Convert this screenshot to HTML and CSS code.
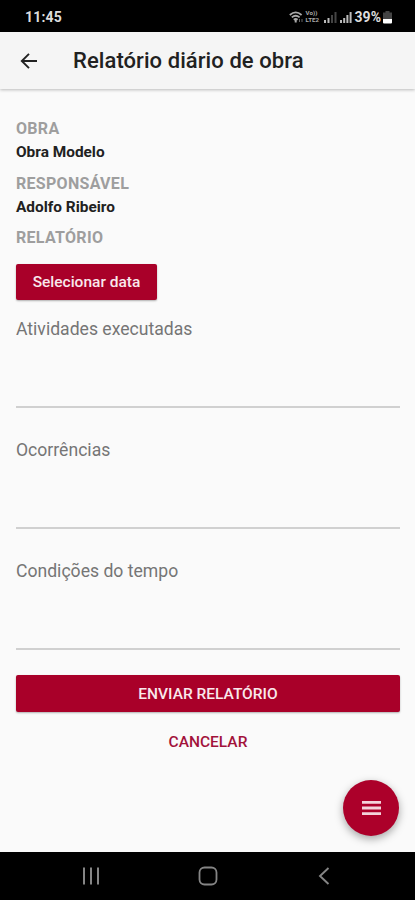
FILE: index.html
```html
<!DOCTYPE html>
<html lang="pt-BR">
<head>
  <meta charset="UTF-8">
  <meta name="viewport" content="width=device-width, initial-scale=1.0">
  <title>Relatório diário de obra</title>

  <link rel="stylesheet" href="styles.css">
</head>

<body>
  <div class="status-bar">
    <span class="time">11:45</span>
    <div class="status-icons">
      <svg class="wifi" width="15" height="13" viewBox="0 0 15 13" fill="none" stroke="#aaa" stroke-width="1.800">
        <path d="M.8 4Q6.700 -1.200 12.600 4M2.800 6.400Q6.700 3.200 10.600 6.400M4.800 8.700Q6.700 7.200 8.600 8.700"/>
        <path d="M6.700 9v2.500" stroke-width="2"/>
        <path d="M10.500 8v3M13 8v3" stroke="#666" stroke-width="1"/>
      </svg>
      <div class="volte"><span>Vo))</span><span>LTE2</span></div>
      <svg class="signal" width="13" height="12" viewBox="0 0 13 12">
        <path d="M0 9h2v3H0zM3.500 7h2v5h-2z" fill="#bbb"/>
        <path d="M7 4h2v8H7zM10.500 1h2v11h-2z" fill="#444"/>
      </svg>
      <svg class="signal" width="12" height="12" viewBox="0 0 12 12" fill="#bbb">
        <path d="M0 9h2v3H0zM3.200 7h2v5h-2zM6.400 4h2v8h-2z"/>
        <path d="M9.600 1h2v11h-2z"/>
      </svg>
      <span class="battery-text">39%</span>
      <svg class="battery" width="9" height="13" viewBox="0 0 9 13">
        <path d="M2.500 0h4v1.500H9V8H0V1.500h2.500z" fill="#444"/>
        <path d="M0 8h9v3.500q0 1-1 1H1q-1 0-1-1z" fill="#fff"/>
      </svg>
    </div>
  </div>

  <header class="toolbar">
    <button type="button" class="back-button" aria-label="Voltar">
      <svg width="18" height="18" viewBox="0 0 18 18" fill="none" stroke="#222" stroke-width="1.900">
        <path d="M17 9H2M9 1.800L1.800 9L9 16.200"/>
      </svg>
    </button>
    <h1>Relatório diário de obra</h1>
  </header>

  <main class="content">
    <div class="info">
      <h2>OBRA</h2>
      <p>Obra Modelo</p>
      <h2>RESPONSÁVEL</h2>
      <p>Adolfo Ribeiro</p>
      <h2>RELATÓRIO</h2>
    </div>

    <button type="button" class="button date-button">Selecionar data</button>

    <form class="report-form">
      <div class="field">
        <label for="atividades">Atividades executadas</label>
        <textarea id="atividades"></textarea>
      </div>
      <div class="field">
        <label for="ocorrencias">Ocorrências</label>
        <textarea id="ocorrencias"></textarea>
      </div>
      <div class="field">
        <label for="tempo">Condições do tempo</label>
        <textarea id="tempo"></textarea>
      </div>

      <button type="button" class="button submit-button">ENVIAR RELATÓRIO</button>
      <button type="button" class="cancel-button">CANCELAR</button>
    </form>

    <button type="button" class="fab" aria-label="Menu">
      <svg width="19" height="14" viewBox="0 0 19 14" fill="#f3d3db">
        <path d="M0 0h19v2.800H0zM0 5.600h19v2.800H0zM0 11.200h19V14H0z"/>
      </svg>
    </button>
  </main>

  <nav class="nav-bar">
    <svg width="18" height="18" viewBox="0 0 18 18" fill="none" stroke="#858585" stroke-width="2">
      <path d="M2 .5v17M9 .5v17M16 .5v17"/>
    </svg>
    <svg width="20" height="20" viewBox="0 0 20 20" fill="none" stroke="#858585" stroke-width="1.800">
      <rect x="1.500" y="1.500" width="17" height="17" rx="5"/>
    </svg>
    <svg width="18" height="18" viewBox="0 0 18 18" fill="none" stroke="#858585" stroke-width="1.900">
      <path d="M13.500 1L5 9l8.500 8"/>
    </svg>
  </nav>
</body>
</html>
```
FILE: styles.css
```css
* {
  box-sizing: border-box;
}

body {
  display: flex;
  flex-direction: column;
  height: 900px;
  margin: 0;
  background-color: #fafafa;
  font-family: Roboto, sans-serif;
  color: #212121;
}

h1, h2, p {
  margin: 0;
}

button {
  padding: 0;
  border: none;
  background: none;
  font-family: inherit;
  cursor: pointer;
}

svg {
  display: block;
}

.status-bar {
  display: flex;
  align-items: center;
  justify-content: space-between;
  height: 32px;
  padding: 2px 23px 0 25px;
  background-color: #000;
  color: #ddd;
  font-size: 14px;
  font-weight: 700;
}

.time {
  letter-spacing: 0.2px;
}

.status-icons {
  display: flex;
  align-items: center;
}

.volte {
  display: flex;
  flex-direction: column;
  width: 16px;
  margin: 0 2px 0 2px;
  color: #aaa;
  font-size: 6.2px;
  line-height: 7.5px;
}

.signal {
  margin-right: 3px;
}

.battery-text {
  margin-right: 2px;
}

.toolbar {
  display: flex;
  align-items: center;
  height: 57px;
  padding: 0 20px;
  background-color: #f5f5f5;
  box-shadow: 0 1px 3px rgba(0, 0, 0, 0.25);
}

.back-button {
  margin-right: 35px;
}

.toolbar h1 {
  font-size: 22px;
  font-weight: 500;
  line-height: 28px;
  letter-spacing: 0.07px;
}

.content {
  position: relative;
  flex: 1;
  padding: 28px 15px 0 16px;
}

.info h2 {
  color: #9e9e9e;
  font-size: 16px;
  font-weight: 700;
  line-height: 24px;
  letter-spacing: 0.3px;
}

.info p {
  margin-bottom: 7px;
  font-size: 15.4px;
  font-weight: 700;
  line-height: 23.5px;
}

.button {
  display: block;
  height: 36px;
  border-radius: 2px;
  background-color: #a90029;
  box-shadow: 0 1px 2px rgba(0, 0, 0, 0.3);
  color: #f9e8ec;
  font-size: 15.5px;
  font-weight: 500;
}

.date-button {
  width: 141px;
  margin-top: 14px;
}

.field {
  height: 121px;
  padding-top: 17px;
}

.field label {
  display: block;
  color: #757575;
  font-size: 17.6px;
  line-height: 24px;
}

.field textarea {
  display: block;
  width: 100%;
  height: 67px;
  padding: 0;
  border: none;
  border-bottom: 2px solid #d0d0d0;
  background: none;
  font: inherit;
  outline: none;
  resize: none;
}

.field textarea:focus {
  border-bottom-color: #a90029;
}

.submit-button {
  width: 100%;
  height: 37px;
  margin-top: 12px;
}

.cancel-button {
  display: block;
  height: 36px;
  margin: 12px auto 0;
  color: #a2123a;
  font-size: 15.5px;
  font-weight: 500;
}

/* floats over the page content */
.fab {
  position: absolute;
  right: 16px;
  bottom: 16px;
  display: flex;
  align-items: center;
  justify-content: center;
  width: 56px;
  height: 56px;
  border-radius: 50%;
  background-color: #ac002a;
  box-shadow: 0 3px 8px rgba(0, 0, 0, 0.35);
}

.nav-bar {
  display: flex;
  align-items: center;
  justify-content: space-between;
  height: 48px;
  padding: 0 82px;
  background-color: #000;
}
```
